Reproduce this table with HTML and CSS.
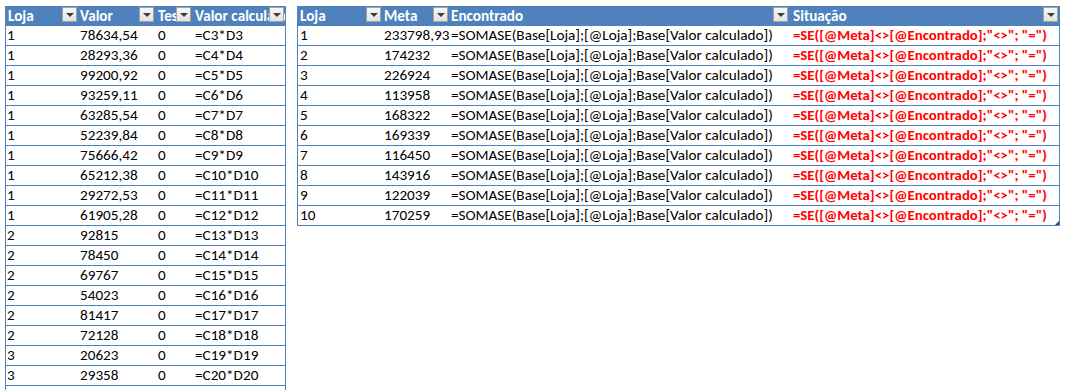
FILE: index.html
```html
<!DOCTYPE html>
<html lang="pt">
<head>
<meta charset="utf-8">
<title>Tabelas</title>
<link rel="stylesheet" href="styles.css">
</head>
<body>
<div class="sheet">
  <div class="tbl tbl-base">
    <div class="row head">
      <div class="cell">Loja<span class="dd"></span></div>
      <div class="cell">Valor<span class="dd"></span></div>
      <div class="cell clip">Teste<span class="dd"></span></div>
      <div class="cell clip">Valor calculado<span class="dd"></span></div>
    </div>
    <div class="row"><div class="cell c1">1</div><div class="cell">78634,54</div><div class="cell">0</div><div class="cell">=C3*D3</div></div>
    <div class="row"><div class="cell c1">1</div><div class="cell">28293,36</div><div class="cell">0</div><div class="cell">=C4*D4</div></div>
    <div class="row"><div class="cell c1">1</div><div class="cell">99200,92</div><div class="cell">0</div><div class="cell">=C5*D5</div></div>
    <div class="row"><div class="cell c1">1</div><div class="cell">93259,11</div><div class="cell">0</div><div class="cell">=C6*D6</div></div>
    <div class="row"><div class="cell c1">1</div><div class="cell">63285,54</div><div class="cell">0</div><div class="cell">=C7*D7</div></div>
    <div class="row"><div class="cell c1">1</div><div class="cell">52239,84</div><div class="cell">0</div><div class="cell">=C8*D8</div></div>
    <div class="row"><div class="cell c1">1</div><div class="cell">75666,42</div><div class="cell">0</div><div class="cell">=C9*D9</div></div>
    <div class="row"><div class="cell c1">1</div><div class="cell">65212,38</div><div class="cell">0</div><div class="cell">=C10*D10</div></div>
    <div class="row"><div class="cell c1">1</div><div class="cell">29272,53</div><div class="cell">0</div><div class="cell">=C11*D11</div></div>
    <div class="row"><div class="cell c1">1</div><div class="cell">61905,28</div><div class="cell">0</div><div class="cell">=C12*D12</div></div>
    <div class="row"><div class="cell c1">2</div><div class="cell">92815</div><div class="cell">0</div><div class="cell">=C13*D13</div></div>
    <div class="row"><div class="cell c1">2</div><div class="cell">78450</div><div class="cell">0</div><div class="cell">=C14*D14</div></div>
    <div class="row"><div class="cell c1">2</div><div class="cell">69767</div><div class="cell">0</div><div class="cell">=C15*D15</div></div>
    <div class="row"><div class="cell c1">2</div><div class="cell">54023</div><div class="cell">0</div><div class="cell">=C16*D16</div></div>
    <div class="row"><div class="cell c1">2</div><div class="cell">81417</div><div class="cell">0</div><div class="cell">=C17*D17</div></div>
    <div class="row"><div class="cell c1">2</div><div class="cell">72128</div><div class="cell">0</div><div class="cell">=C18*D18</div></div>
    <div class="row"><div class="cell c1">3</div><div class="cell">20623</div><div class="cell">0</div><div class="cell">=C19*D19</div></div>
    <div class="row"><div class="cell c1">3</div><div class="cell">29358</div><div class="cell">0</div><div class="cell">=C20*D20</div></div>
    <div class="row"><div class="cell c1"></div><div class="cell"></div><div class="cell"></div><div class="cell"></div></div>
  </div>

  <div class="tbl tbl-meta">
    <div class="row head">
      <div class="cell">Loja<span class="dd"></span></div>
      <div class="cell">Meta<span class="dd"></span></div>
      <div class="cell">Encontrado<span class="dd"></span></div>
      <div class="cell">Situação<span class="dd"></span></div>
    </div>
    <div class="row"><div class="cell c1">1</div><div class="cell">233798,93</div><div class="cell">=SOMASE(Base[Loja];[@Loja];Base[Valor calculado])</div><div class="cell sit">=SE([@Meta]&lt;&gt;[@Encontrado];"&lt;&gt;"; "=")</div></div>
    <div class="row"><div class="cell c1">2</div><div class="cell">174232</div><div class="cell">=SOMASE(Base[Loja];[@Loja];Base[Valor calculado])</div><div class="cell sit">=SE([@Meta]&lt;&gt;[@Encontrado];"&lt;&gt;"; "=")</div></div>
    <div class="row"><div class="cell c1">3</div><div class="cell">226924</div><div class="cell">=SOMASE(Base[Loja];[@Loja];Base[Valor calculado])</div><div class="cell sit">=SE([@Meta]&lt;&gt;[@Encontrado];"&lt;&gt;"; "=")</div></div>
    <div class="row"><div class="cell c1">4</div><div class="cell">113958</div><div class="cell">=SOMASE(Base[Loja];[@Loja];Base[Valor calculado])</div><div class="cell sit">=SE([@Meta]&lt;&gt;[@Encontrado];"&lt;&gt;"; "=")</div></div>
    <div class="row"><div class="cell c1">5</div><div class="cell">168322</div><div class="cell">=SOMASE(Base[Loja];[@Loja];Base[Valor calculado])</div><div class="cell sit">=SE([@Meta]&lt;&gt;[@Encontrado];"&lt;&gt;"; "=")</div></div>
    <div class="row"><div class="cell c1">6</div><div class="cell">169339</div><div class="cell">=SOMASE(Base[Loja];[@Loja];Base[Valor calculado])</div><div class="cell sit">=SE([@Meta]&lt;&gt;[@Encontrado];"&lt;&gt;"; "=")</div></div>
    <div class="row"><div class="cell c1">7</div><div class="cell">116450</div><div class="cell">=SOMASE(Base[Loja];[@Loja];Base[Valor calculado])</div><div class="cell sit">=SE([@Meta]&lt;&gt;[@Encontrado];"&lt;&gt;"; "=")</div></div>
    <div class="row"><div class="cell c1">8</div><div class="cell">143916</div><div class="cell">=SOMASE(Base[Loja];[@Loja];Base[Valor calculado])</div><div class="cell sit">=SE([@Meta]&lt;&gt;[@Encontrado];"&lt;&gt;"; "=")</div></div>
    <div class="row"><div class="cell c1">9</div><div class="cell">122039</div><div class="cell">=SOMASE(Base[Loja];[@Loja];Base[Valor calculado])</div><div class="cell sit">=SE([@Meta]&lt;&gt;[@Encontrado];"&lt;&gt;"; "=")</div></div>
    <div class="row last"><div class="cell c1">10</div><div class="cell">170259</div><div class="cell">=SOMASE(Base[Loja];[@Loja];Base[Valor calculado])</div><div class="cell sit">=SE([@Meta]&lt;&gt;[@Encontrado];"&lt;&gt;"; "=")</div><span class="grip"></span></div>
  </div>
</div>
</body>
</html>
```

FILE: styles.css
```css
html, body {
  margin: 0;
  padding: 0;
  background: #ffffff;
  overflow: hidden;
}

body {
  font-family: Carlito, Lato, "Liberation Sans", sans-serif;
  font-size: 15.2px;
  color: #000000;
}

.sheet {
  display: flex;
  align-items: flex-start;
  gap: 11px;
  padding: 6px 0 0 5px;
}

.tbl {
  border-left: 1px solid #4f81bd;
  border-right: 1px solid #4f81bd;
}

.row {
  display: grid;
  height: 20px;
  box-sizing: border-box;
  border-bottom: 1px solid #4f81bd;
  position: relative;
}

.tbl-base .row {
  grid-template-columns: 72px 77px 37px 93px;
}

.tbl-meta .row {
  grid-template-columns: 84px 67px 340px 270px;
}

.cell {
  position: relative;
  padding: 0 0 0 2px;
  line-height: 19px;
  white-space: nowrap;
  overflow: hidden;
}

.cell.c1 {
  padding-left: 1px;
}

.tbl-meta .cell.c1 {
  padding-left: 2px;
}

.tbl-meta .row > .cell:nth-child(4) {
  padding-left: 4px;
}

.tbl-base .row > .cell:nth-child(3),
.tbl-base .row > .cell:nth-child(4) {
  padding-left: 3px;
}

.head {
  background: #4f81bd;
  color: #ffffff;
  font-weight: bold;
}

.head .cell {
  line-height: 20px;
}

.dd {
  position: absolute;
  right: 1px;
  top: 1px;
  width: 15px;
  height: 15px;
  box-sizing: border-box;
  border: 1px solid #a3a3a3;
  background: linear-gradient(#f7f7f7, #e2e2e2);
}

.dd::after {
  content: "";
  position: absolute;
  left: 3px;
  top: 5px;
  border-left: 4px solid transparent;
  border-right: 4px solid transparent;
  border-top: 4px solid #3c3c3c;
}

.sit {
  color: #ff0000;
  font-weight: bold;
  font-size: 14.8px;
}

.grip {
  position: absolute;
  right: 0;
  bottom: 0;
  width: 0;
  height: 0;
  border-left: 4px solid transparent;
  border-bottom: 4px solid #1f4e8c;
}
```
